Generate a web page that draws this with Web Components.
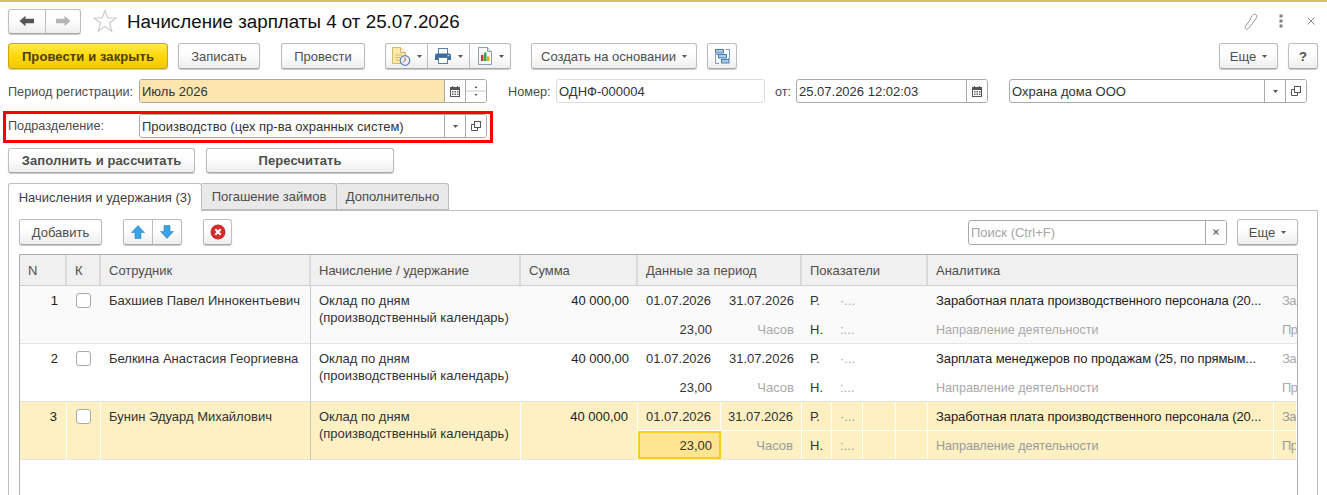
<!DOCTYPE html>
<html lang="ru"><head><meta charset="utf-8"><title>Начисление зарплаты</title>
<style>
html,body{margin:0;height:495px;overflow:hidden;background:#fff;font:13px "Liberation Sans",Arial,sans-serif;color:#4b4b4b}
</style></head><body>
<payroll-form></payroll-form>
<script>
const ICONS={
back:'<svg width="16" height="12" viewBox="0 0 16 12"><path d="M0.5 6L6.5 .8V3.8H15V8.2H6.5V11.2Z" fill="#555"/></svg>',
fwd:'<svg width="16" height="12" viewBox="0 0 16 12"><path d="M15.5 6L9.5 .8V3.8H1V8.2H9.5V11.2Z" fill="#b4b4b4"/></svg>',
star:'<svg width="24" height="24" viewBox="0 0 24 24"><path d="M12 1.5L14.9 9H23L16.5 14 18.8 22.3 12 17.4 5.2 22.3 7.5 14 1 9H9.1Z" fill="#fff" stroke="#c9c9c9" stroke-width="1.1"/></svg>',
link:'<svg width="16" height="17" viewBox="0 0 16 17" fill="none" stroke="#9a9a9a" stroke-width="1"><path d="M8 6L3 12.5C1.8 14.2 2.2 15.5 3.2 16 4.2 16.5 5.3 16 6.2 14.8L12.8 5.8C14.2 3.8 14 2.2 12.8 1.4 11.6 .7 10.3 1.2 9.3 2.5L6.5 6.2"/></svg>',
kebab:'<svg width="4" height="14" viewBox="0 0 4 14"><g fill="#808080"><rect x="0.5" y="0.5" width="3" height="3"/><rect x="0.5" y="5.5" width="3" height="3"/><rect x="0.5" y="10.5" width="3" height="3"/></g></svg>',
close:'<svg width="8" height="8" viewBox="0 0 8 8"><path d="M.5 .5L7.5 7.5M7.5 .5L.5 7.5" stroke="#888" stroke-width="1"/></svg>',
doc:'<svg width="20" height="20" viewBox="0 0 20 20"><path d="M1.5 1.5H9.5L14.5 6.5V17.5H1.5Z" fill="#fbeaa9" stroke="#d4b968"/><path d="M9.5 1.5V6.5H14.5" fill="#fff6d2" stroke="#d4b968"/><path d="M4 9H11M4 11.5H9M4 14H8" stroke="#d9bd6f"/><circle cx="14" cy="14.5" r="4.8" fill="#e9f1fb" stroke="#5b83b5" stroke-width="1.2"/><path d="M14 11.5V14.5M12 16.5L14 14.5" stroke="#c83a32" stroke-width="1"/></svg>',
print:'<svg width="18" height="18" viewBox="0 0 18 18"><rect x="4.5" y="1.5" width="9" height="6" fill="#fff" stroke="#5b7da6"/><path d="M1 8.5Q1 6.5 3 6.5H15Q17 6.5 17 8.5V13H1Z" fill="#3f6d9f"/><rect x="4.5" y="10.5" width="9" height="6" fill="#fff" stroke="#5b7da6"/><rect x="13.5" y="8" width="2" height="1.2" fill="#bcd3ea"/></svg>',
report:'<svg width="16" height="18" viewBox="0 0 16 18"><path d="M1.5 .5H10.5L14.5 4.5V17.5H1.5Z" fill="#f7f8fb" stroke="#8d9fb5"/><path d="M10.5 .5V4.5H14.5" fill="#dbe3ee" stroke="#8d9fb5"/><rect x="4" y="8" width="2.5" height="6" fill="#c9342c"/><rect x="7" y="5.5" width="2.5" height="8.5" fill="#3aa648"/><rect x="10" y="9.5" width="2.5" height="4.5" fill="#e3a92a"/></svg>',
struct:'<svg width="15" height="15" viewBox="0 0 15 15"><path d="M3 5.5H.5V14.5H4M10.5 .5H14.5V9.5H13" fill="none" stroke="#7f9fc2"/><rect x=".5" y=".5" width="8" height="3.5" fill="#a9c8e6" stroke="#4f7fae"/><rect x="3.5" y="5.5" width="8" height="3.5" fill="#a9c8e6" stroke="#4f7fae"/><rect x="6.5" y="10.5" width="7.5" height="3.5" fill="#a9c8e6" stroke="#4f7fae"/></svg>',
up:'<svg width="14" height="14" viewBox="0 0 14 14"><path d="M7 .5L13.5 7.5H10V13.5H4V7.5H.5Z" fill="#3ba1e2" stroke="#2a86c4" stroke-width=".6"/></svg>',
down:'<svg width="14" height="14" viewBox="0 0 14 14"><path d="M7 13.5L13.5 6.5H10V.5H4V6.5H.5Z" fill="#3ba1e2" stroke="#2a86c4" stroke-width=".6"/></svg>',
cancel:'<svg width="16" height="16" viewBox="0 0 16 16"><circle cx="8" cy="8" r="7.5" fill="#d42b2b"/><path d="M5.3 5.3L10.7 10.7M10.7 5.3L5.3 10.7" stroke="#fff" stroke-width="2"/></svg>',
cal:'<svg width="10" height="11" viewBox="0 0 10 11"><rect x="0.5" y="1.5" width="9" height="9" fill="#fff" stroke="#555"/><rect x="0" y="1" width="10" height="3" fill="#555"/><rect x="2" y="0" width="1" height="2" fill="#555"/><rect x="7" y="0" width="1" height="2" fill="#555"/><g fill="#666"><rect x="2" y="5" width="1.5" height="1.5"/><rect x="4.5" y="5" width="1.5" height="1.5"/><rect x="7" y="5" width="1.5" height="1.5"/><rect x="2" y="7.5" width="1.5" height="1.5"/><rect x="4.5" y="7.5" width="1.5" height="1.5"/><rect x="7" y="7.5" width="1.5" height="1.5"/></g></svg>',
dd:'<svg width="5" height="3" viewBox="0 0 5 3"><path d="M0 0H5L2.5 3Z" fill="#555"/></svg>',
open:'<svg width="10" height="10" viewBox="0 0 10 10" fill="none" stroke="#555"><rect x="3.5" y="0.5" width="6" height="6" fill="#fff"/><path d="M3.5 3.5H.5V9.5H6.5V6.5"/></svg>',
x:'<svg width="6" height="6" viewBox="0 0 6 6"><path d="M.5 .5L5.5 5.5M5.5 .5L.5 5.5" stroke="#666" stroke-width="1.1"/></svg>',
spin:'<svg width="20" height="22" viewBox="0 0 20 22"><path d="M8.5 8H11.5L10 6Z" fill="#555"/><path d="M0 11H20" stroke="#c8c8c8"/><path d="M8.5 14H11.5L10 16Z" fill="#555"/></svg>'
};

class UiIcon extends HTMLElement{connectedCallback(){if(this.shadowRoot)return;
 this.attachShadow({mode:'open'}).innerHTML='<style>:host{display:inline-flex;align-items:center;justify-content:center;flex:none}svg{display:block}</style>'+ICONS[this.getAttribute('name')];}}
customElements.define('ui-icon',UiIcon);

class UiBtn extends HTMLElement{connectedCallback(){if(this.shadowRoot)return;
 this.attachShadow({mode:'open'}).innerHTML=`<style>
 :host{display:inline-flex;box-sizing:border-box;height:26px;flex:none;align-items:center;justify-content:center;gap:6px;border:1px solid #bdbdbd;border-bottom-color:#a8a8a8;border-radius:3px;background:linear-gradient(#fff 0,#fdfdfd 45%,#eeeeee 100%);box-shadow:0 1px 1px rgba(0,0,0,.22);color:#4e4e4e;font-size:13px;white-space:nowrap}
 :host([primary]){background:linear-gradient(#ffe94d,#fdd80c 50%,#f3c800);border-color:#c9a800;color:#4c3f00;font-weight:bold;letter-spacing:.1px}
 :host([strong]){font-weight:bold;letter-spacing:.1px}
 </style><slot></slot>`;}}
customElements.define('ui-btn',UiBtn);

class UiBtnGroup extends HTMLElement{connectedCallback(){if(this.shadowRoot)return;
 this.attachShadow({mode:'open'}).innerHTML=`<style>
 :host{display:inline-flex;box-sizing:border-box;height:26px;flex:none;border:1px solid #bdbdbd;border-bottom-color:#a8a8a8;border-radius:3px;background:linear-gradient(#fff 0,#fdfdfd 45%,#eeeeee 100%);box-shadow:0 1px 1px rgba(0,0,0,.22)}
 ::slotted(*){display:flex;align-items:center;justify-content:center;gap:6px;border-right:1px solid #bdbdbd;box-sizing:border-box}
 ::slotted(:last-child){border-right:0}
 </style><slot></slot>`;}}
customElements.define('ui-btn-group',UiBtnGroup);

class UiField extends HTMLElement{connectedCallback(){if(this.shadowRoot)return;
 const v=this.getAttribute('value')||'',ph=this.getAttribute('placeholder')||'';
 const btns=(this.getAttribute('buttons')||'').split(' ').filter(Boolean);
 this.attachShadow({mode:'open'}).innerHTML=`<style>
 :host{display:flex;box-sizing:border-box;height:24px;flex:none;border:1px solid #a9a9a9;border-radius:3px;background:#fff;overflow:hidden;color:#333;font-size:13px}
 :host([soft]){border-color:#dcdcdc}
 .v{flex:1;min-width:0;padding-left:2px;display:flex;align-items:center;white-space:nowrap;overflow:hidden}
 :host([marked]) .v{background:#fde5b0}
 .ph{color:#a6a6a6}
 .b{width:21px;flex:none;box-sizing:border-box;border-left:1px solid #a9a9a9;display:flex;align-items:center;justify-content:center;background:#fff}
 </style><div class="v">${v}${ph?`<span class="ph">${ph}</span>`:''}</div>${btns.map(b=>`<div class="b"><ui-icon name="${b}"></ui-icon></div>`).join('')}`;}}
customElements.define('ui-field',UiField);

class UiTabs extends HTMLElement{connectedCallback(){if(this.shadowRoot)return;
 const t=[['Начисления и удержания (3)',194,1],['Погашение займов',135],['Дополнительно',112]];
 this.attachShadow({mode:'open'}).innerHTML=`<style>
 :host{display:flex;height:28px;margin:0 0 -1px 8px;position:relative;z-index:1}
 div{box-sizing:border-box;border:1px solid #bdbdbd;border-left:0;background:#e9e9e9;display:flex;align-items:center;justify-content:center;font-size:13px;color:#4b4b4b;height:27px;border-radius:0 3px 0 0;white-space:nowrap}
 div.on{background:#fff;height:28px;border-left:1px solid #bdbdbd;border-bottom:0;border-radius:3px 3px 0 0;color:#3f3f3f}
 </style>${t.map(x=>`<div class="${x[2]?'on':''}" style="width:${x[1]}px">${x[0]}</div>`).join('')}`;}}
customElements.define('ui-tabs',UiTabs);

const COLS='47px 34px 210px 210px 117px 83px 81px 30px 31px 33px 32px 346px 1fr';
class PayHead extends HTMLElement{connectedCallback(){if(this.shadowRoot)return;
 const h=[['N',1,1],['К',2,1],['Сотрудник',3,1],['Начисление / удержание',4,1],['Сумма',5,1],['Данные за период',6,2],['Показатели',8,4],['Аналитика',12,2]];
 this.attachShadow({mode:'open'}).innerHTML=`<style>
 :host{display:grid;grid-template-columns:${COLS};height:31px;box-sizing:border-box;background:#f0f0f0;border-bottom:1px solid #cfcfcf}
 div{display:flex;align-items:center;padding:0 0 0 8px;box-sizing:border-box;border-right:2px solid #dadada;color:#4e4e4e;white-space:nowrap;overflow:hidden}
 div:last-child{border-right:0}
 </style>${h.map(c=>`<div style="grid-column:${c[1]}/span ${c[2]}">${c[0]}</div>`).join('')}`;}}
customElements.define('pay-head',PayHead);

class PayRow extends HTMLElement{connectedCallback(){if(this.shadowRoot)return;
 const a=n=>this.getAttribute(n)||'';
 const sel=this.hasAttribute('sel');
 this.attachShadow({mode:'open'}).innerHTML=`<style>
 :host{display:grid;grid-template-columns:${COLS};grid-template-rows:29px 29px;height:58px;box-sizing:border-box;background:#fff;border-bottom:1px solid #e4e4e4;color:#333}
 :host([alt]){background:#fafafa}
 :host([sel]){background:#fdf0c3}
 .c{box-sizing:border-box;padding:1px 8px 0;height:28px;display:flex;align-items:center;white-space:nowrap;overflow:hidden}
 .r{justify-content:flex-end}
 .t{grid-row:1/span 2;height:auto;align-items:flex-start;padding-top:6px;line-height:17px}
 .sep{border-right:1px solid #c8c8c8}
 .dim{color:#a9a9a9}
 .small{font-size:12.6px}
 .dk{color:#222}
 .box{width:15px;height:15px;box-sizing:border-box;border:1px solid #a9a9a9;border-radius:3px;background:#fff;margin-left:1px}
 .clip{padding-right:0;letter-spacing:-.5px}
 :host([sel]) .c{border-right:1px solid #fff}
 :host([sel]) .top{box-shadow:0 1px 0 #fff}
 :host([sel]) .sep{border-right-color:#c8c8c8}
 :host([sel]) .dim{color:#9a9a9a}
 :host([sel]) .cur{background:#ffe58f;border:2px solid #fbcb1f;height:28px;padding:0 6px}
 </style>
 <div class="c t r dk" style="grid-column:1;padding-right:9px">${a('n')}</div>
 <div class="c t" style="grid-column:2;padding-top:7px"><span class="box"></span></div>
 <div class="c t sep" style="grid-column:3">${a('who')}</div>
 <div class="c t" style="grid-column:4;display:block">Оклад по дням<br>(производственный календарь)</div>
 <div class="c t r dk" style="grid-column:5;padding-right:9px">40 000,00</div>
 <div class="c top" style="grid-column:6;grid-row:1">01.07.2026</div>
 <div class="c top r" style="grid-column:7;grid-row:1">31.07.2026</div>
 <div class="c top" style="grid-column:8;grid-row:1">Р.</div>
 <div class="c top dim" style="grid-column:9;grid-row:1">·...</div>
 <div class="c top" style="grid-column:10;grid-row:1"></div>
 <div class="c top" style="grid-column:11;grid-row:1"></div>
 <div class="c top" style="grid-column:12;grid-row:1;color:#222;letter-spacing:-.1px">${a('an')}</div>
 <div class="c top dim clip" style="grid-column:13;grid-row:1">За</div>
 <div class="c r ${sel?'cur':''}" style="grid-column:6;grid-row:2;padding-right:${sel?7:9}px">23,00</div>
 <div class="c r dim" style="grid-column:7;grid-row:2">Часов</div>
 <div class="c" style="grid-column:8;grid-row:2">Н.</div>
 <div class="c dim" style="grid-column:9;grid-row:2">:...</div>
 <div class="c" style="grid-column:10;grid-row:2"></div>
 <div class="c" style="grid-column:11;grid-row:2"></div>
 <div class="c dim small" style="grid-column:12;grid-row:2">Направление деятельности</div>
 <div class="c dim clip" style="grid-column:13;grid-row:2">Пр</div>`;
 }}
customElements.define('pay-row',PayRow);

class PayTable extends HTMLElement{connectedCallback(){if(this.shadowRoot)return;
 const A='Заработная плата производственного персонала (20...';
 this.attachShadow({mode:'open'}).innerHTML=`<style>
 :host{display:block;box-sizing:border-box;height:300px;margin:9px 0 0 0;border:1px solid #b0b0b0;overflow:hidden;background:#fff}
 </style>
 <pay-head></pay-head>
 <pay-row alt n="1" who="Бахшиев Павел Иннокентьевич" an="${A}"></pay-row>
 <pay-row n="2" who="Белкина Анастасия Георгиевна" an="Зарплата менеджеров по продажам (25, по прямым..."></pay-row>
 <pay-row sel n="3" who="Бунин Эдуард Михайлович" an="${A}"></pay-row>`;}}
customElements.define('pay-table',PayTable);

class PayrollForm extends HTMLElement{connectedCallback(){if(this.shadowRoot)return;
 this.attachShadow({mode:'open'}).innerHTML=`<style>
 :host{display:block;height:495px;overflow:hidden;border-top:2px solid #d5c06c;box-sizing:border-box}
 .row{display:flex;align-items:center}
 .head{height:24px;margin:7px 8px 0 8px}
 .title{font-size:18.8px;color:#111;margin-left:10px;padding-top:1px;white-space:nowrap;flex:1}
 .tools{display:flex;align-items:center}
 .cmd{height:26px;margin:10px 9px 0 8px}
 .form{height:24px;margin:10px 20px 0 8px}
 .lbl{white-space:nowrap;color:#4b4b4b;font-size:12.7px;padding-top:1px}
 .red{box-sizing:border-box;margin:8px 0 0 3px;width:490px;height:32px;border:3px solid #f00;padding:0 2px;display:flex;align-items:flex-start}
 .red .lbl{line-height:24px;padding-top:0}
 .acts{height:25px;margin:5px 0 0 8px}
 .acts ui-btn{height:25px}
 .panel{box-sizing:border-box;margin:0 9px 0 8px;border:1px solid #bdbdbd;height:300px;padding:8px 19px 0 10px}
 .tb{height:26px}
 .grow{flex:1}
 </style>
 <div class="row head">
  <ui-btn-group style="width:73px;height:25px"><span style="width:37px"><ui-icon name="back"></ui-icon></span><span style="width:35px"><ui-icon name="fwd"></ui-icon></span></ui-btn-group>
  <ui-icon name="star" style="margin-left:12px"></ui-icon>
  <span class="title">Начисление зарплаты 4 от 25.07.2026</span>
  <div class="tools"><ui-icon name="link"></ui-icon><ui-icon name="kebab" style="margin-left:20px"></ui-icon><ui-icon name="close" style="margin-left:24px;margin-right:4px"></ui-icon></div>
 </div>
 <div class="row cmd">
  <ui-btn primary style="width:160px">Провести и закрыть</ui-btn>
  <ui-btn style="width:82px;margin-left:10px">Записать</ui-btn>
  <ui-btn style="width:84px;margin-left:21px">Провести</ui-btn>
  <ui-btn-group style="width:126px;margin-left:20px">
   <span style="width:42px"><ui-icon name="doc"></ui-icon><ui-icon name="dd"></ui-icon></span>
   <span style="width:42px"><ui-icon name="print"></ui-icon><ui-icon name="dd"></ui-icon></span>
   <span style="width:40px"><ui-icon name="report"></ui-icon><ui-icon name="dd"></ui-icon></span>
  </ui-btn-group>
  <ui-btn style="width:166px;margin-left:20px">Создать на основании<ui-icon name="dd"></ui-icon></ui-btn>
  <ui-btn style="width:30px;margin-left:10px"><ui-icon name="struct"></ui-icon></ui-btn>
  <span class="grow"></span>
  <ui-btn style="width:59px">Еще<ui-icon name="dd"></ui-icon></ui-btn>
  <ui-btn style="width:30px;margin-left:10px;font-weight:bold">?</ui-btn>
 </div>
 <div class="row form">
  <span class="lbl" style="width:131px">Период регистрации:</span>
  <ui-field marked value="Июль 2026" buttons="cal spin" style="width:348px"></ui-field>
  <span class="lbl" style="margin-left:21px;width:48px">Номер:</span>
  <ui-field soft value="ОДНФ-000004" style="width:209px"></ui-field>
  <span class="lbl" style="margin-left:10px;width:21px">от:</span>
  <ui-field value="25.07.2026 12:02:03" buttons="cal" style="width:192px"></ui-field>
  <ui-field value="Охрана дома ООО" buttons="dd open" style="width:298px;margin-left:21px"></ui-field>
 </div>
 <div class="red">
  <span class="lbl" style="width:131px">Подразделение:</span>
  <ui-field value="Производство (цех пр-ва охранных систем)" buttons="dd open" style="width:348px"></ui-field>
 </div>
 <div class="row acts">
  <ui-btn strong style="width:187px">Заполнить и рассчитать</ui-btn>
  <ui-btn strong style="width:188px;margin-left:11px">Пересчитать</ui-btn>
 </div>
 <ui-tabs style="margin-top:10px"></ui-tabs>
 <div class="panel">
  <div class="row tb">
   <ui-btn style="width:83px">Добавить</ui-btn>
   <ui-btn-group style="width:59px;margin-left:21px"><span style="width:29px"><ui-icon name="up"></ui-icon></span><span style="width:28px"><ui-icon name="down"></ui-icon></span></ui-btn-group>
   <ui-btn style="width:29px;margin-left:21px"><ui-icon name="cancel"></ui-icon></ui-btn>
   <span class="grow"></span>
   <ui-field placeholder="Поиск (Ctrl+F)" buttons="x" style="width:259px;height:25px"></ui-field>
   <ui-btn style="width:61px;margin-left:10px">Еще<ui-icon name="dd"></ui-icon></ui-btn>
  </div>
  <pay-table></pay-table>
 </div>`;}}
customElements.define('payroll-form',PayrollForm);
</script>
</body></html>
